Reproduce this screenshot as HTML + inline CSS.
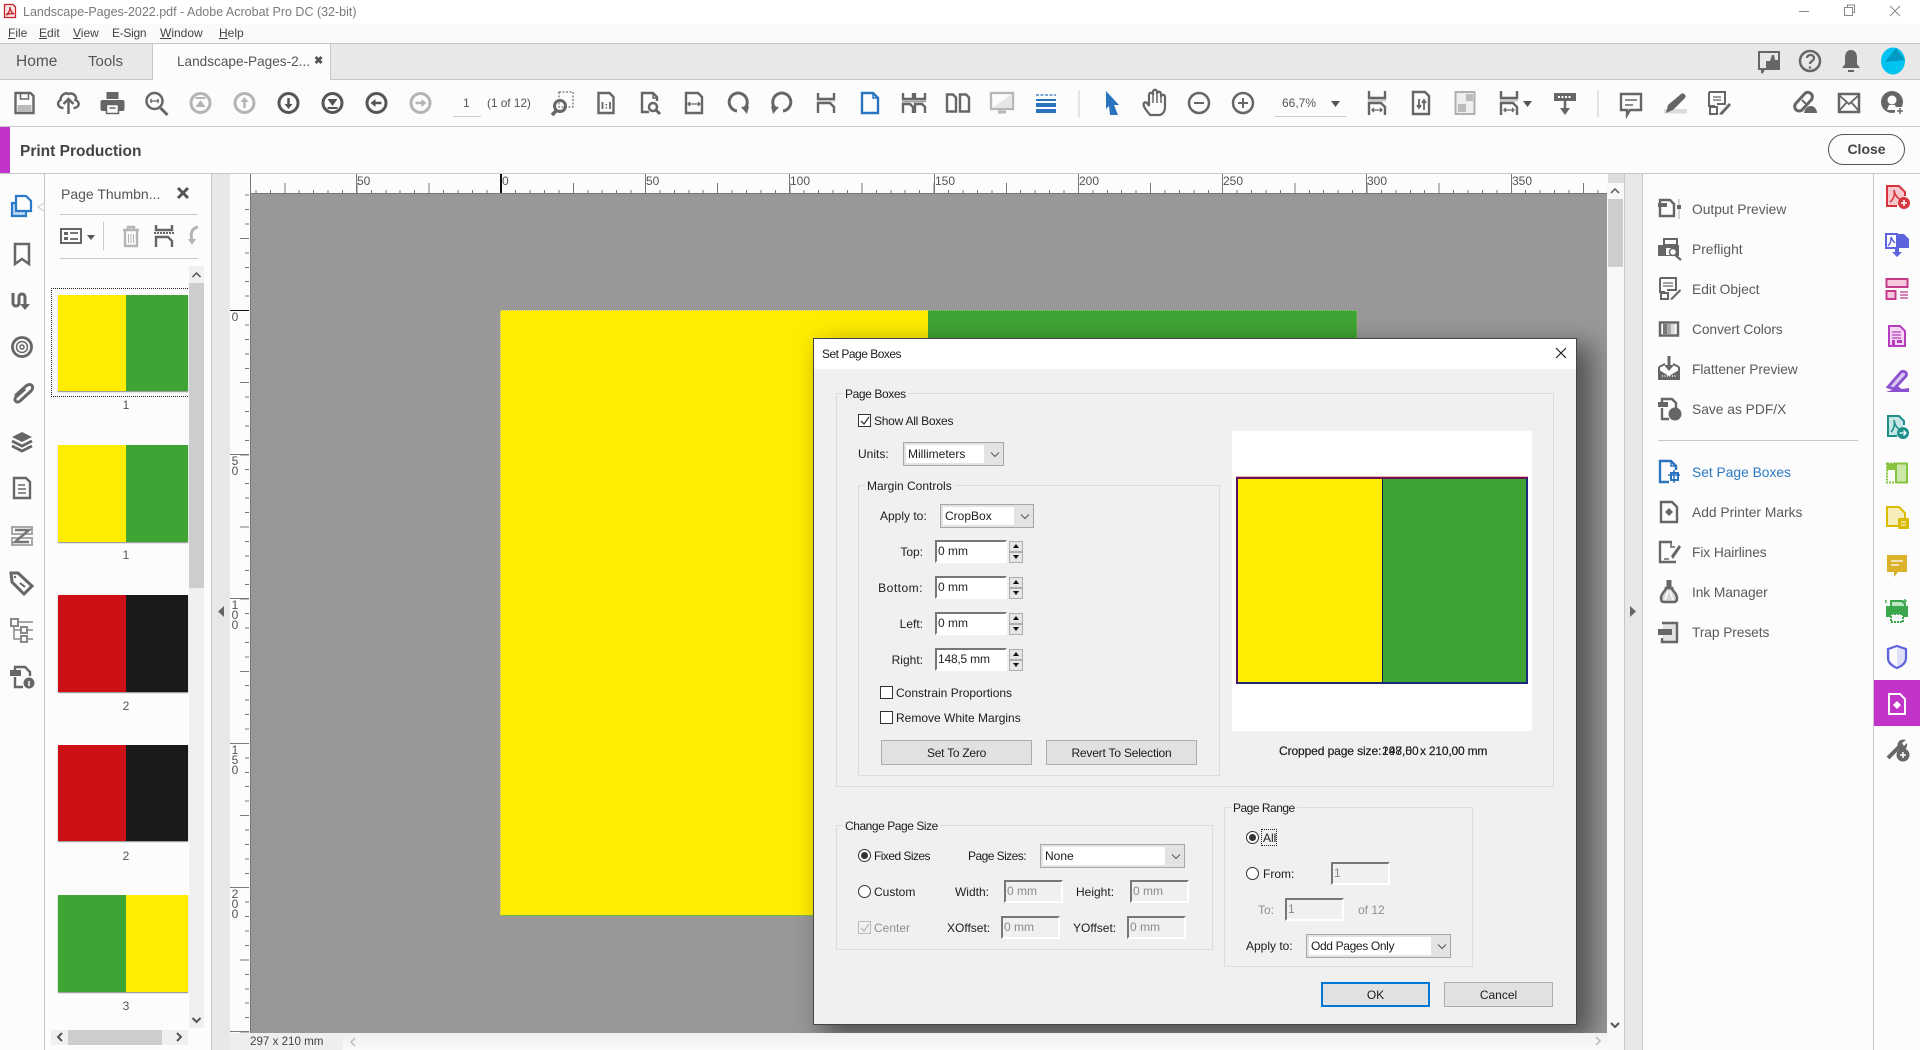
<!DOCTYPE html>
<html><head><meta charset="utf-8"><title>Landscape-Pages-2022.pdf - Adobe Acrobat Pro DC</title>
<style>
html,body{margin:0;padding:0;width:1920px;height:1050px;overflow:hidden;background:#fcfcfc;font-family:"Liberation Sans",sans-serif;font-size:12px;color:#1a1a1a}
.a{position:absolute}
.t{position:absolute;white-space:nowrap;line-height:16px;height:16px}
.d{font-size:12px;color:#1c1c1c}
.g{color:#9a9a9a}
.r{font-size:13.8px;color:#5a5a5a;left:1692px}
.m{font-size:12px;color:#444}
.v{position:absolute;font-size:12px;line-height:10px;width:10px;left:230px;text-align:center;color:#555}
.rl{font-size:12px;color:#555;top:173px}
.grp{position:absolute;border:1px solid #dcdcdc;box-sizing:border-box}
.lg{position:absolute;background:#f0f0f0;padding:0 2px;left:6px;font-size:12px;line-height:14px;top:-7px;white-space:nowrap;color:#1c1c1c}
.cb{position:absolute;box-sizing:border-box;border:1px solid #a6a6a6;background:#e3e3e3;height:24px}
.cb i{position:absolute;left:2px;top:2px;bottom:2px;background:#fff;display:block}
.cb b{position:absolute;left:4px;top:3px;font-weight:normal;font-size:12px;line-height:16px;color:#1c1c1c;white-space:nowrap}
.inp{position:absolute;box-sizing:border-box;width:72px;height:23px;background:#fff;border:2px solid;border-color:#777 #fff #fff #777;font-size:12px;line-height:16px;padding:1px 0 0 1px;color:#222;white-space:nowrap}
.dis{width:59px;background:#f0f0f0;color:#8a8a8a}
.sp{position:absolute;left:1009px;width:14px;height:11px;box-sizing:border-box;border:1px solid #adadad;background:#e6e6e6}
.chk{position:absolute;width:13px;height:13px;box-sizing:border-box;border:1px solid #333;background:#fff}
.rad{position:absolute;width:13px;height:13px;box-sizing:border-box;border:1px solid #333;border-radius:50%;background:#fff}
.rad.on:after{content:"";position:absolute;left:2px;top:2px;width:7px;height:7px;border-radius:50%;background:#333}
.btn{position:absolute;box-sizing:border-box;height:25px;border:1px solid #adadad;background:#e1e1e1;text-align:center;font-size:12px;line-height:25px;color:#1c1c1c}
.th{position:absolute;left:58px;width:130px;box-shadow:0 1px 1px #888}
.th i{position:absolute;top:0;bottom:0;display:block}
.n{position:absolute;left:116px;width:20px;text-align:center;font-size:12px;line-height:14px;color:#555}
</style></head><body>

<!-- chrome backgrounds -->
<div class="a" style="left:0;top:0;width:1920px;height:24px;background:#fff"></div>
<div class="a" style="left:0;top:24px;width:1920px;height:19px;background:#fafafa"></div>
<div class="a" style="left:0;top:43px;width:1920px;height:1px;background:#c8c8c8"></div>
<div class="a" style="left:0;top:44px;width:1920px;height:35px;background:#e8e8e8"></div>
<div class="a" style="left:0;top:79px;width:1920px;height:1px;background:#c8c8c8"></div>
<div class="a" style="left:152px;top:44px;width:179px;height:36px;background:#fcfcfc;border-left:1px solid #c8c8c8;border-right:1px solid #c8c8c8;box-sizing:border-box"></div>
<div class="a" style="left:0;top:80px;width:1920px;height:46px;background:#fcfcfc"></div>
<div class="a" style="left:0;top:126px;width:1920px;height:1px;background:#c8c8c8"></div>
<div class="a" style="left:0;top:127px;width:10px;height:46px;background:#c233c9"></div>
<div class="a" style="left:0;top:173px;width:1920px;height:1px;background:#c8c8c8"></div>

<div class="t" style="left:23px;top:4px;font-size:12.5px;color:#7a7a7a">Landscape-Pages-2022.pdf - Adobe Acrobat Pro DC (32-bit)</div>
<div class="t m" style="left:8px;top:25px"><u>F</u>ile</div>
<div class="t m" style="left:39px;top:25px"><u>E</u>dit</div>
<div class="t m" style="left:73px;top:25px"><u>V</u>iew</div>
<div class="t m" style="left:112px;top:25px;letter-spacing:-.3px">E-Sign</div>
<div class="t m" style="left:160px;top:25px"><u>W</u>indow</div>
<div class="t m" style="left:219px;top:25px"><u>H</u>elp</div>
<div class="t" style="left:16px;top:54px;font-size:15.5px;color:#555">Home</div>
<div class="t" style="left:88px;top:54px;font-size:15px;color:#555">Tools</div>
<div class="t" style="left:177px;top:54px;font-size:13.6px;color:#555">Landscape-Pages-2...</div>
<div class="t" style="left:314px;top:53px;font-size:11px;font-weight:bold;color:#555">✖</div>
<div class="t" style="left:20px;top:144px;font-size:15.5px;font-weight:bold;color:#444">Print Production</div>
<div class="a" style="left:1828px;top:134px;width:77px;height:31px;box-sizing:border-box;border:1px solid #555;border-radius:16px;text-align:center;font-size:14px;font-weight:bold;line-height:29px;color:#444">Close</div>

<div class="t" style="left:463px;top:95px;font-size:12px;color:#555">1</div>
<div class="t" style="left:487px;top:95px;font-size:12px;color:#555;letter-spacing:-.1px">(1 of 12)</div>
<div class="a" style="left:453px;top:116px;width:28px;height:1px;background:#ccc"></div>
<div class="t" style="left:1282px;top:95px;font-size:12px;color:#555">66,7%</div>
<div class="a" style="left:1275px;top:116px;width:71px;height:1px;background:#ccc"></div>

<!-- left nav + panel -->
<div class="a" style="left:44px;top:174px;width:1px;height:876px;background:#c8c8c8"></div>
<div class="a" style="left:211px;top:174px;width:1px;height:876px;background:#c8c8c8"></div>
<div class="a" style="left:212px;top:174px;width:18px;height:876px;background:#e8e8e8"></div>
<div class="t" style="left:61px;top:186px;font-size:14px;color:#555">Page Thumbn...</div>
<div class="a" style="left:60px;top:214px;width:138px;height:1px;background:#c8c8c8"></div>
<div class="a" style="left:60px;top:258px;width:138px;height:1px;background:#c8c8c8"></div>
<div class="a" style="left:103px;top:222px;width:1px;height:28px;background:#ccc"></div>

<div class="a" style="left:51px;top:288px;width:137px;height:109px;box-sizing:border-box;border:1px dotted #222;border-right:0"></div>
<div class="th" style="top:295px;height:96px"><i style="left:0;width:68px;background:#ffed00"></i><i style="left:68px;width:62px;background:#3ea433"></i></div>
<div class="n" style="top:398px">1</div>
<div class="th" style="top:445px;height:97px"><i style="left:0;width:68px;background:#ffed00"></i><i style="left:68px;width:62px;background:#3ea433"></i></div>
<div class="n" style="top:548px">1</div>
<div class="th" style="top:595px;height:97px"><i style="left:0;width:68px;background:#cc1016"></i><i style="left:68px;width:62px;background:#1a1a1a"></i></div>
<div class="n" style="top:699px">2</div>
<div class="th" style="top:745px;height:96px"><i style="left:0;width:68px;background:#cc1016"></i><i style="left:68px;width:62px;background:#1a1a1a"></i></div>
<div class="n" style="top:849px">2</div>
<div class="th" style="top:895px;height:97px"><i style="left:0;width:68px;background:#3ea433"></i><i style="left:68px;width:62px;background:#ffed00"></i></div>
<div class="n" style="top:999px">3</div>

<div class="a" style="left:189px;top:266px;width:15px;height:762px;background:#f0f0f0"></div>
<div class="a" style="left:189px;top:283px;width:15px;height:305px;background:#cdcdcd"></div>
<div class="a" style="left:51px;top:1030px;width:137px;height:15px;background:#f0f0f0"></div>
<div class="a" style="left:68px;top:1030px;width:94px;height:15px;background:#cdcdcd"></div>

<!-- rulers -->
<div class="a" style="left:250px;top:174px;width:1357px;height:19px;background:#fcfcfc"></div>
<div class="a" style="left:230px;top:174px;width:20px;height:859px;background:#fcfcfc"></div>
<div class="a" style="left:250px;top:174px;width:1px;height:19px;background:#777"></div>
<div class="a" style="left:250px;top:190px;width:1357px;height:3px;background:repeating-linear-gradient(90deg,transparent 0 5.4px,#777 5.4px 6.4px,transparent 6.4px 14.43px)"></div>
<div class="a" style="left:250px;top:183px;width:1357px;height:10px;background:repeating-linear-gradient(90deg,transparent 0 34.25px,#777 34.25px 35.25px,transparent 35.25px 72.15px)"></div>
<div class="a" style="left:356px;top:174px;width:1px;height:19px;background:#777"></div>
<div class="a" style="left:500px;top:174px;width:2px;height:19px;background:#111"></div>
<div class="a" style="left:645px;top:174px;width:1px;height:19px;background:#777"></div>
<div class="a" style="left:789px;top:174px;width:1px;height:19px;background:#777"></div>
<div class="a" style="left:934px;top:174px;width:1px;height:19px;background:#777"></div>
<div class="a" style="left:1078px;top:174px;width:1px;height:19px;background:#777"></div>
<div class="a" style="left:1222px;top:174px;width:1px;height:19px;background:#777"></div>
<div class="a" style="left:1366px;top:174px;width:1px;height:19px;background:#777"></div>
<div class="a" style="left:1511px;top:174px;width:1px;height:19px;background:#777"></div>
<div class="t rl" style="left:357px">50</div>
<div class="t rl" style="left:502px">0</div>
<div class="t rl" style="left:646px">50</div>
<div class="t rl" style="left:790px">100</div>
<div class="t rl" style="left:935px">150</div>
<div class="t rl" style="left:1079px">200</div>
<div class="t rl" style="left:1223px">250</div>
<div class="t rl" style="left:1367px">300</div>
<div class="t rl" style="left:1512px">350</div>
<div class="a" style="left:1608px;top:174px;width:16px;height:9px;background:#ddd"></div>

<div class="a" style="left:245px;top:193px;width:4px;height:840px;background:repeating-linear-gradient(180deg,transparent 0 1.6px,#777 1.6px 2.6px,transparent 2.6px 14.43px)"></div>
<div class="a" style="left:240px;top:193px;width:9px;height:840px;background:repeating-linear-gradient(180deg,transparent 0 44.85px,#777 44.85px 45.85px,transparent 45.85px 72.15px)"></div>
<div class="a" style="left:230px;top:310px;width:19px;height:1px;background:#111"></div>
<div class="a" style="left:230px;top:454px;width:19px;height:1px;background:#777"></div>
<div class="a" style="left:230px;top:598px;width:19px;height:1px;background:#777"></div>
<div class="a" style="left:230px;top:743px;width:19px;height:1px;background:#777"></div>
<div class="a" style="left:230px;top:887px;width:19px;height:1px;background:#777"></div>
<div class="a" style="left:230px;top:1031px;width:19px;height:1px;background:#777"></div>
<div class="v" style="top:312px">0</div>
<div class="v" style="top:456px">5<br>0</div>
<div class="v" style="top:600px">1<br>0<br>0</div>
<div class="v" style="top:745px">1<br>5<br>0</div>
<div class="v" style="top:889px">2<br>0<br>0</div>

<!-- scroller & right panel -->
<div class="a" style="left:1607px;top:183px;width:17px;height:867px;background:#f8f8f8"></div>
<div class="a" style="left:1608px;top:199px;width:15px;height:68px;background:#cdcdcd"></div>
<div class="a" style="left:1624px;top:174px;width:1px;height:876px;background:#c8c8c8"></div>
<div class="a" style="left:1625px;top:174px;width:17px;height:876px;background:#e8e8e8"></div>
<div class="a" style="left:1642px;top:174px;width:1px;height:876px;background:#c8c8c8"></div>
<div class="a" style="left:1873px;top:174px;width:1px;height:876px;background:#c8c8c8"></div>
<div class="a" style="left:1874px;top:680px;width:46px;height:46px;background:#c233c9"></div>
<div class="t r" style="top:202px">Output Preview</div>
<div class="t r" style="top:242px">Preflight</div>
<div class="t r" style="top:282px">Edit Object</div>
<div class="t r" style="top:322px;letter-spacing:-.1px">Convert Colors</div>
<div class="t r" style="top:362px;letter-spacing:-.1px">Flattener Preview</div>
<div class="t r" style="top:402px">Save as PDF/X</div>
<div class="a" style="left:1658px;top:440px;width:200px;height:1px;background:#c8c8c8"></div>
<div class="t r" style="top:465px;color:#2a78c4">Set Page Boxes</div>
<div class="t r" style="top:505px">Add Printer Marks</div>
<div class="t r" style="top:545px;letter-spacing:-.1px">Fix Hairlines</div>
<div class="t r" style="top:585px;letter-spacing:-.1px">Ink Manager</div>
<div class="t r" style="top:625px;letter-spacing:-.1px">Trap Presets</div>

<!-- status bar -->
<div class="a" style="left:230px;top:1033px;width:113px;height:17px;background:#eee"></div>
<div class="a" style="left:343px;top:1033px;width:1264px;height:17px;background:linear-gradient(180deg,#f0f0f0,#fafafa)"></div>
<div class="t" style="left:250px;top:1034px;font-size:11.6px;color:#444">297 x 210 mm</div>

<!-- document area (clipped) -->
<div class="a" style="left:0;top:0;width:1920px;height:1050px;clip-path:polygon(250px 193px,1607px 193px,1607px 1033px,250px 1033px)">
  <div class="a" style="left:250px;top:193px;width:1357px;height:840px;background:#989898;border-top:1px solid #777;border-left:1px solid #777;box-sizing:border-box"></div>
  <div class="a" style="left:500px;top:310px;width:428px;height:606px;background:#ffed00"></div>
  <div class="a" style="left:928px;top:310px;width:429px;height:606px;background:#3ea433"></div>
  <div class="a" style="left:500px;top:310px;width:857px;height:606px;box-sizing:border-box;border:1px dotted #b8b8a0;border-bottom:1px solid #78b848;border-right-color:#78b848"></div>
  <div class="a" style="left:813px;top:338px;width:764px;height:687px;box-sizing:border-box;background:#f0f0f0;border:1px solid #444;box-shadow:12px 10px 24px 3px rgba(0,0,0,.45)"></div>
</div>

<!-- dialog -->
<div class="a" style="left:814px;top:339px;width:762px;height:30px;background:#fff"></div>
<div class="t d" style="left:822px;top:346px;letter-spacing:-.5px">Set Page Boxes</div>

<div class="grp" style="left:836px;top:393px;width:718px;height:394px"><span class="lg" style="letter-spacing:-.4px">Page Boxes</span></div>
<div class="chk" style="left:858px;top:414px"></div>
<div class="t d" style="left:874px;top:413px;letter-spacing:-.25px">Show All Boxes</div>
<div class="t d" style="left:858px;top:446px">Units:</div>
<div class="cb" style="left:903px;top:442px;width:101px"><i style="width:78px"></i><b>Millimeters</b></div>

<div class="grp" style="left:858px;top:485px;width:362px;height:291px"><span class="lg">Margin Controls</span></div>
<div class="t d" style="left:880px;top:508px">Apply to:</div>
<div class="cb" style="left:940px;top:504px;width:94px"><i style="width:71px"></i><b>CropBox</b></div>

<div class="t d" style="left:880px;width:43px;text-align:right;top:544px">Top:</div>
<div class="inp" style="left:935px;top:540px">0 mm</div>
<div class="sp" style="top:541px"></div><div class="sp" style="top:552px"></div>
<div class="t d" style="left:870px;width:53px;text-align:right;top:580px;letter-spacing:.5px">Bottom:</div>
<div class="inp" style="left:935px;top:576px">0 mm</div>
<div class="sp" style="top:577px"></div><div class="sp" style="top:588px"></div>
<div class="t d" style="left:880px;width:43px;text-align:right;top:616px">Left:</div>
<div class="inp" style="left:935px;top:612px">0 mm</div>
<div class="sp" style="top:613px"></div><div class="sp" style="top:624px"></div>
<div class="t d" style="left:880px;width:43px;text-align:right;top:652px">Right:</div>
<div class="inp" style="left:935px;top:648px;letter-spacing:-.2px">148,5 mm</div>
<div class="sp" style="top:649px"></div><div class="sp" style="top:660px"></div>

<div class="chk" style="left:880px;top:686px"></div>
<div class="t d" style="left:896px;top:685px">Constrain Proportions</div>
<div class="chk" style="left:880px;top:711px"></div>
<div class="t d" style="left:896px;top:710px">Remove White Margins</div>
<div class="btn" style="left:881px;top:740px;width:151px;letter-spacing:-.25px">Set To Zero</div>
<div class="btn" style="left:1046px;top:740px;width:151px;letter-spacing:-.2px">Revert To Selection</div>

<div class="a" style="left:1232px;top:431px;width:300px;height:300px;background:#fff"></div>
<div class="a" style="left:1236px;top:477px;width:292px;height:207px;box-sizing:border-box;background:linear-gradient(90deg,#ffed00 0 144px,#141a50 144px 145px,#3ea433 145px);border:2px solid #1b2a7a;border-left-color:#5a1060;border-top-color:#6a1050;box-shadow:0 -1px 0 #f0b0b8"></div>
<div class="t" style="left:1279px;top:743px;font-size:12px;color:#1c1c1c;letter-spacing:-.1px;-webkit-text-stroke:.2px #1c1c1c">Cropped page size: </div>
<div class="t" style="left:1382px;top:743px;font-size:12px;color:#1c1c1c">297,00</div>
<div class="t" style="left:1382px;top:743px;font-size:12px;color:#1c1c1c">148,50</div>
<div class="t" style="left:1420px;top:743px;font-size:12px;color:#1c1c1c;letter-spacing:-.2px;-webkit-text-stroke:.2px #1c1c1c">x 210,00 mm</div>

<div class="grp" style="left:836px;top:825px;width:377px;height:125px"><span class="lg" style="letter-spacing:-.45px">Change Page Size</span></div>
<div class="rad on" style="left:858px;top:849px"></div>
<div class="t d" style="left:874px;top:848px;letter-spacing:-.55px">Fixed Sizes</div>
<div class="t d" style="left:968px;top:848px;letter-spacing:-.55px">Page Sizes:</div>
<div class="cb" style="left:1040px;top:844px;width:145px"><i style="width:122px"></i><b>None</b></div>
<div class="rad" style="left:858px;top:885px"></div>
<div class="t d" style="left:874px;top:884px">Custom</div>
<div class="t d" style="left:954px;width:35px;text-align:right;top:884px">Width:</div>
<div class="inp dis" style="left:1004px;top:880px">0 mm</div>
<div class="t d" style="left:1076px;top:884px">Height:</div>
<div class="inp dis" style="left:1130px;top:880px">0 mm</div>
<div class="chk" style="left:858px;top:921px;border-color:#bbb;background:#f0f0f0"></div>
<div class="t d g" style="left:874px;top:920px;color:#8f8f8f">Center</div>
<div class="t d" style="left:947px;top:920px">XOffset:</div>
<div class="inp dis" style="left:1001px;top:916px">0 mm</div>
<div class="t d" style="left:1073px;top:920px">YOffset:</div>
<div class="inp dis" style="left:1127px;top:916px">0 mm</div>

<div class="grp" style="left:1224px;top:807px;width:249px;height:160px"><span class="lg" style="letter-spacing:-.5px">Page Range</span></div>
<div class="rad on" style="left:1246px;top:831px"></div>
<div class="t d" style="left:1263px;top:830px">All</div>
<div class="a" style="left:1261px;top:829px;width:16px;height:17px;box-sizing:border-box;border:1px dotted #222"></div>
<div class="rad" style="left:1246px;top:867px"></div>
<div class="t d" style="left:1263px;top:866px">From:</div>
<div class="inp dis" style="left:1331px;top:862px">1</div>
<div class="t d" style="left:1258px;top:902px;color:#8f8f8f">To:</div>
<div class="inp dis" style="left:1285px;top:898px">1</div>
<div class="t d" style="left:1358px;top:902px;color:#8f8f8f">of 12</div>
<div class="t d" style="left:1246px;top:938px">Apply to:</div>
<div class="cb" style="left:1306px;top:934px;width:145px"><i style="width:122px"></i><b style="letter-spacing:-.35px">Odd Pages Only</b></div>
<div class="btn" style="left:1321px;top:982px;width:109px;border:2px solid #0078d7;line-height:23px">OK</div>
<div class="btn" style="left:1444px;top:982px;width:109px">Cancel</div>

<!-- all vector icons -->
<svg class="a" style="left:0;top:0" width="1920" height="1050" viewBox="0 0 1920 1050" fill="none" stroke="#666" stroke-width="2.400">
<!-- title icon -->
<g transform="translate(10,11)" stroke="#c8232c" stroke-width="1.300"><path d="M-5.500-6.500H3L5.500-4V6.500H-5.500Z" fill="#fbe6e6"/><path d="M-4 4C-1 2 0-1 0-4C0-1 2 2 4 3C1 2-2 3-4 4Z"/></g>
<!-- window controls -->
<path d="M1799 11.500H1809" stroke="#888" stroke-width="1"/>
<path d="M1844.500 7.500H1852.500V15.500H1844.500ZM1847.500 7.500V5H1854.500V12.500H1852.500" stroke="#888" stroke-width="1"/>
<path d="M1890 6L1900 16M1900 6L1890 16" stroke="#888" stroke-width="1"/>

<!-- tabs row icons -->
<g transform="translate(1769,61)"><path d="M-10-9H10V8H-5L-7 12V8H-10Z" stroke-width="2"/><path d="M-3 8V0H1L3-6L5-6L6-1H10V8Z" fill="#666" stroke="none"/></g>
<g transform="translate(1810,61)"><circle r="10" stroke-width="2.500"/><path d="M-3-3C-3-7 4-7 4-3C4 0 0 0 0 3" stroke-width="2.200"/><circle cy="6.500" r="1.300" fill="#666" stroke="none"/></g>
<g transform="translate(1851,61)" fill="#666" stroke="none"><path d="M0-11C4-11 6-8 6-3V3L9 7H-9L-6 3V-3C-6-8-4-11 0-11Z"/><rect x="-3" y="9" width="6" height="2"/></g>
<ellipse cx="1893" cy="61" rx="12" ry="13.500" fill="#00c3f2" stroke="none"/>
<path d="M1896 48L1905 60L1885 62Z" fill="#0099c4" stroke="none"/>

<!-- toolbar -->
<g transform="translate(24.500,103)"><path d="M-9-10H6L9-7V10H-9Z"/><path d="M-4-10V-4H4V-10" stroke-width="1.500"/><rect x="-7" y="2" width="14" height="7" fill="#bbb" stroke="none"/></g>
<g transform="translate(68.500,103)" stroke-width="2.500"><path d="M-5 5C-11 5-12-1-8-3C-8-8-3-11 0-9C5-11 9-6 7-3C12-1 11 5 5 5"/><path d="M0 11V-4M-5 1L0-4L5 1"/></g>
<g transform="translate(112.500,103)"><rect x="-6" y="-11" width="12" height="7" fill="#666" stroke="none"/><rect x="-12" y="-3" width="24" height="11" rx="2" fill="#666" stroke="none"/><rect x="-6" y="1.500" width="12" height="9" fill="#fcfcfc" stroke="#666" stroke-width="1.500"/><path d="M-3 5H3" stroke-width="1.500"/></g>
<g transform="translate(156.500,103)"><circle cx="-2" cy="-2" r="8" stroke-width="2.500"/><path d="M4 5L11 12" stroke-width="3"/><path d="M-6-2H2M-5-4L-6-2L-5 0M1-4L2-2L1 0" stroke-width="1.300"/></g>

<g transform="translate(200.500,103)" stroke="#b4b4b4"><circle r="9.500" stroke-width="3"/><path d="M-5-5H5" stroke-width="2"/><path d="M0-3L5 4H-5Z" fill="#b4b4b4" stroke="none"/></g>
<g transform="translate(244.500,103)" stroke="#b4b4b4"><circle r="9.500" stroke-width="3"/><path d="M0 5V-3" stroke-width="2.500"/><path d="M-4-1L0-6L4-1Z" fill="#b4b4b4" stroke="none"/></g>
<g transform="translate(288.500,103)" stroke="#555"><circle r="9.500" stroke-width="3"/><path d="M0-5V3" stroke-width="2.500"/><path d="M-4 1L0 6L4 1Z" fill="#555" stroke="none"/></g>
<g transform="translate(332.500,103)" stroke="#555"><circle r="9.500" stroke-width="3"/><path d="M-5 5H5" stroke-width="2"/><path d="M0 3L5-4H-5Z" fill="#555" stroke="none"/></g>
<g transform="translate(376.500,103)" stroke="#555"><circle r="9.500" stroke-width="3"/><path d="M5 0H-3" stroke-width="2.500"/><path d="M-1-4L-6 0L-1 4Z" fill="#555" stroke="none"/></g>
<g transform="translate(420.500,103)" stroke="#b4b4b4"><circle r="9.500" stroke-width="3"/><path d="M-5 0H3" stroke-width="2.500"/><path d="M1-4L6 0L1 4Z" fill="#b4b4b4" stroke="none"/></g>

<g transform="translate(562,103)"><rect x="-3" y="-11" width="14" height="15" stroke-width="1" stroke="#555" stroke-dasharray="2 1.500"/><circle cx="-2" cy="3" r="5.500" stroke-width="3"/><path d="M-6 8L-10 12" stroke-width="3.500"/></g>
<g transform="translate(606,103)"><path d="M-7.500-10H3.500L7.500-6V10H-7.500Z"/><path d="M-3.500-1V6M4-1V6" stroke-width="1.800"/><path d="M.3 1V2.500M.3 4V5.500" stroke-width="1.500"/></g>
<g transform="translate(650,103)"><path d="M-1 9H-8V-10H3L7-6V-2"/><path d="M3-10V-5H7" stroke-width="1.500"/><circle cx="3" cy="4" r="4" stroke-width="2.500"/><path d="M6 7L10 11" stroke-width="3"/></g>
<g transform="translate(694,103)"><path d="M-8-10H4L8-6V10H-8Z"/><path d="M-5 1H5M-4-1L-6 1L-4 3M4-1L6 1L4 3" stroke-width="1.300"/></g>
<g transform="translate(738,103)" stroke-width="3"><path d="M-1 8A9 9 0 1 1 7 5"/><path d="M3 4L11 3L9 11Z" fill="#666" stroke="none"/></g>
<g transform="translate(782,103) scale(-1,1)" stroke-width="3"><path d="M-1 8A9 9 0 1 1 7 5"/><path d="M3 4L11 3L9 11Z" fill="#666" stroke="none"/></g>
<g transform="translate(826,103)"><path d="M-8-10V-4H8V-10"/><path d="M-8 10V0H4L8 4V10"/><path d="M-9-2H9" stroke="#ccc" stroke-width="1.500"/></g>
<g transform="translate(870,103)" stroke="#2a74bf"><path d="M-8-10H3L8-5V10H-8Z" stroke-width="2.400"/><path d="M3-10V-5H8" stroke-width="1.500"/></g>
<g transform="translate(914,103)"><path d="M-11-10V-4H-1V-10M1-10V-4H11V-10"/><path d="M-11 10V1H-4L-1 4V10M1 10V1H8L11 4V10"/><path d="M-12-1.500H12" stroke="#999" stroke-width="1.500"/></g>
<g transform="translate(958,103)"><path d="M-11-8.500H-5L-2-5.500V8.500H-11ZM2-8.500H8L11-5.500V8.500H2Z"/></g>
<g transform="translate(1002,103)" stroke="#b8b8b8"><rect x="-11" y="-10" width="22" height="16"/><path d="M-10 5L10-9V5Z" fill="#e6e6e6" stroke="none"/><path d="M-4 9H4" stroke-width="3"/></g>
<g transform="translate(1046,103)" stroke="#2a74bf"><path d="M-10-8H10" stroke-width="1.200" stroke-dasharray="3 1.500"/><path d="M-10-3H10" stroke-width="2"/><path d="M-10 2H10M-10 8H10" stroke-width="4"/></g>

<path d="M1079 90V117" stroke="#ccc" stroke-width="1"/>
<path d="M1106 92L1119 106H1114L1118 116H1110L1109 107L1106 110Z" fill="#2a74bf" stroke="none" transform="translate(0,-1)"/>
<g transform="translate(1155,103)"><path d="M-5 12C-8 8-13 3-11 0C-9-2-7 1-6 3V-8C-6-11-2-11-2-8V-11C-2-14 2-14 2-11V-9C2-12 6-12 6-9V-6C6-9 10-9 10-6V4C10 9 7 12 4 12Z" stroke-width="2.200"/><path d="M-2-8V0M2-9V0M6-6V0" stroke-width="1.500"/></g>
<g transform="translate(1199,103)" stroke-width="2.500"><circle r="10"/><path d="M-5 0H5" stroke-width="2"/></g>
<g transform="translate(1243,103)" stroke-width="2.500"><circle r="10"/><path d="M-5 0H5M0-5V5" stroke-width="2"/></g>
<path d="M1331 101H1340L1335.500 107Z" fill="#555" stroke="none"/>

<g transform="translate(1377,103)"><path d="M-8-12V-5H8V-12"/><rect x="-9" y="-3.500" width="18" height="2" fill="#ccc" stroke="none"/><path d="M-8 12V0H4L8 4V12"/><path d="M-5 7H5M-3 5L-5 7L-3 9M3 5L5 7L3 9" stroke-width="1.300"/></g>
<g transform="translate(1421,103)"><path d="M-8-11H4L8-7V11H-8Z"/><path d="M-2-4V4M3-1V7" stroke-width="1.800"/><path d="M-4 2L-2 5L0 2M1 0L3-3L5 0" stroke-width="1.800"/></g>
<g transform="translate(1465,103)" stroke="#b0b0b0"><rect x="-9.500" y="-11" width="19" height="22" stroke-width="2" fill="#eee"/><rect x="1" y="-9" width="7" height="7" fill="#bbb" stroke="none"/><rect x="-7" y="1" width="8" height="8" fill="#bbb" stroke="none"/></g>
<g transform="translate(1509,103)"><path d="M-8-12V-5H8V-12"/><rect x="-9" y="-3.500" width="18" height="2" fill="#ccc" stroke="none"/><path d="M-8 12V0H4L8 4V12"/><path d="M-5 7H5M-3 5L-5 7L-3 9M3 5L5 7L3 9" stroke-width="1.300"/></g>
<path d="M1523 101H1532L1527.500 107Z" fill="#555" stroke="none"/>
<g transform="translate(1565,103)"><rect x="-11" y="-10" width="22" height="8" fill="#666" stroke="none"/><path d="M-7-6H7" stroke="#fff" stroke-width="2" stroke-dasharray="2 1.500"/><path d="M0-2V9" stroke-width="2.500"/><path d="M-5 5L0 12L5 5Z" fill="#666" stroke="none"/></g>
<path d="M1598 90V117" stroke="#ccc" stroke-width="1"/>
<g transform="translate(1631,103)"><path d="M-10-9H10V7H-1L-4 12V7H-10Z" stroke-width="2.400"/><path d="M-6-3H6M-6 2H2" stroke-width="1.500"/></g>
<g transform="translate(1675,103)"><rect x="-11" y="6" width="23" height="4.500" fill="#ddd" stroke="none"/><path d="M-9 10L-7 2L6-9C8-11 12-8 10-5L-2 7Z" fill="#666" stroke="none"/></g>
<g transform="translate(1719,103)"><path d="M-10-11H6V1H-2M-10-11V3H-4" stroke-width="2"/><path d="M-6-6H2M-6-3H2" stroke-width="1.300"/><rect x="-9" y="4" width="7" height="7" stroke-width="2"/><path d="M0 11L10 0L12 2L3 12Z" fill="#666" stroke="none"/></g>
<g transform="translate(1805,103)"><rect x="-12" y="-4.500" width="22" height="9" rx="4.500" stroke-width="3" transform="rotate(-48) translate(1,-2)"/><path d="M-3-3L2 2" stroke-width="2"/><path d="M-1 10C0 5 3 3 6 3C9 3 12 6 12 10Z" fill="#666" stroke="none"/></g>
<g transform="translate(1849,103)" stroke-width="2.500"><rect x="-10" y="-9" width="20" height="18"/><path d="M-10-8L0 1L10-8M-10 8L-2-1M10 8L2-1" stroke-width="1.800"/></g>
<g transform="translate(1892,102)"><circle r="11" fill="#666" stroke="none"/><circle cy="-2" r="4.500" fill="#fcfcfc" stroke="none"/><path d="M-3 3H3L5 8H-5Z" fill="#fcfcfc" stroke="none"/><rect x="3" y="5" width="10" height="10" fill="#fcfcfc" stroke="none"/><path d="M8 6V12M5 9H11" stroke-width="1.500"/></g>

<!-- left nav -->
<g transform="translate(22,206)" stroke="#2a7ac8"><path d="M-6-3H-10V10H4V5" fill="#bcd8f2" stroke-width="2.200"/><path d="M-6-10H4L9-5V5H-6Z" fill="#fcfcfc" stroke-width="2.200"/></g>
<path d="M44 203L38 207L44 211" fill="#fcfcfc" stroke="#c8c8c8" stroke-width="1"/>
<path d="M15 244H29V264L22 259L15 264Z" stroke-width="2.500"/>
<g transform="translate(22,301)"><path d="M-9-8V2C-9 6-3 6-3 2V-4C-3-8 3-8 3-4V4" stroke-width="3"/><path d="M-2 3H8L3 9Z" fill="#666" stroke="none"/></g>
<g transform="translate(22,347)"><circle r="9.500" stroke-width="2.800"/><circle r="5.500" stroke-width="1.500"/><circle r="2" stroke-width="1.500"/></g>
<path d="M15 396L26 386C31 382 35 387 31 391L20 401C17 404 13 400 16 397L25 389" stroke-width="3"/>
<g transform="translate(22,442)"><path d="M0-10L10-5L0 0L-10-5Z" fill="#666" stroke="none"/><path d="M-10-1L0 4L10-1M-10 4L0 9L10 4" stroke-width="2.800"/></g>
<g transform="translate(22,488)"><path d="M-8-10H4L8-6V10H-8Z"/><path d="M-4-3H3M-4 1H4M-4 5H4" stroke-width="1.500"/></g>
<g transform="translate(22,536)" stroke="#a8a8a8"><rect x="-10" y="-9" width="20" height="7" stroke-width="2"/><rect x="-10" y="2" width="20" height="7" stroke-width="2"/><path d="M-7-6H7L-7 6H7" stroke="#777" stroke-width="2.500"/></g>
<g transform="translate(22,583)"><path d="M-11-11H-4L10 2L2 10L-10-2Z" stroke-width="3" transform="translate(0,1)"/><path d="M-2 0L3 4" stroke-width="2"/><circle cx="-7" cy="-6" r="1.200" fill="#666" stroke="none"/></g>
<g transform="translate(22,630)" stroke="#888" stroke-width="2"><rect x="-11" y="-11" width="7" height="7"/><rect x="-1" y="-3" width="6" height="6"/><rect x="-1" y="6" width="6" height="6"/><path d="M-8-4V9H-1M-8 0H-1M-4-8H11M5 0H11M5 9H11" stroke-width="1.500"/></g>
<g transform="translate(22,677)"><path d="M-7-6V-10H3L8-5V-1"/><rect x="-12" y="-7" width="11" height="6" fill="#666" stroke="none"/><path d="M-7 0V10H1"/><circle cx="7" cy="6" r="5.500" fill="#666" stroke="none"/><path d="M7 4V9" stroke="#fff" stroke-width="1.500"/></g>

<!-- panel toolbar -->
<path d="M178 188L188 198M188 188L178 198" stroke="#555" stroke-width="3"/>
<g transform="translate(71,236)"><rect x="-10" y="-7" width="20" height="14" stroke-width="2"/><rect x="-7" y="-4" width="4" height="3" fill="#666" stroke="none"/><rect x="-7" y="1" width="4" height="3" fill="#666" stroke="none"/><path d="M-1-3H7M-1 3H7" stroke-width="1.800"/></g>
<path d="M87 235H95L91 240Z" fill="#555" stroke="none"/>
<g transform="translate(131,236)" stroke="#b4b4b4"><path d="M-8-6H8M-3-6V-9H3V-6"/><path d="M-6-5V10H6V-5" stroke-width="2.400"/><path d="M-2.500-2V7M0-2V7M2.500-2V7" stroke-width="1"/></g>
<g transform="translate(164,236)"><path d="M-8-11V-6H8V-11"/><path d="M-10-3H10" stroke-width="2" stroke-dasharray="2 1"/><path d="M-8 11V1H4L8 5V11"/></g>
<g transform="translate(195,236)" stroke="#b4b4b4" stroke-width="3"><path d="M3-9C-3-8-5-3-3 4"/><path d="M-7 3H1L-3 9Z" fill="#b4b4b4" stroke="none"/></g>

<!-- panel scrollbars -->
<path d="M192.500 277L196.500 273L200.500 277" stroke="#555" stroke-width="1.500"/>
<path d="M192.500 1018L196.500 1022L200.500 1018" stroke="#555" stroke-width="2"/>
<path d="M62 1033L58 1037L62 1041" stroke="#555" stroke-width="2"/>
<path d="M177 1033L181 1037L177 1041" stroke="#555" stroke-width="2"/>

<!-- collapse arrows -->
<path d="M224 606L218 611.500L224 617Z" fill="#666" stroke="none"/>
<path d="M1630 606L1636 611.500L1630 617Z" fill="#666" stroke="none"/>
<path d="M1611 193L1615 189L1619 193" stroke="#555" stroke-width="1.500"/>
<path d="M1611 1023L1615 1027L1619 1023" stroke="#555" stroke-width="2"/>
<path d="M355 1038L351 1042L355 1046" stroke="#bbb" stroke-width="1.500"/>
<path d="M1596 1037L1600 1041L1596 1045" stroke="#bbb" stroke-width="1.500"/>

<!-- right tool list icons -->
<g transform="translate(1669,209)"><path d="M-3-9H-9V7H5V-5L1-9Z" stroke-width="2.400"/><rect x="-11" y="-6" width="9" height="4" fill="#666" stroke="none"/><path d="M10-10V10" stroke-width="1" stroke="#aaa"/><rect x="8" y="-4" width="4" height="4" fill="#666" stroke="none"/></g>
<g transform="translate(1669,249)"><rect x="-5" y="-10" width="13" height="6" stroke-width="2"/><rect x="-11" y="-4" width="21" height="11" fill="#666" stroke="none"/><rect x="-3" y="-1" width="9" height="7" fill="#fcfcfc" stroke="none"/><path d="M5 5L12 11" stroke-width="2.200"/><circle cx="4" cy="3" r="3.500" stroke-width="1.500" fill="#fcfcfc"/></g>
<g transform="translate(1669,289)"><path d="M-9-11H7V1H-2M-9-11V3H-4" stroke-width="2"/><path d="M-6-6H4M-6-3H4" stroke-width="1.300"/><rect x="-8" y="4" width="7" height="6" stroke-width="2"/><path d="M1 10L11 0L12 2L3 11Z" fill="#666" stroke="none"/></g>
<g transform="translate(1669,329)"><rect x="-9" y="-6.500" width="18" height="13" fill="#fff" stroke="#666" stroke-width="2.500"/><rect x="-6" y="-5" width="4" height="10" fill="#777" stroke="none"/><rect x="-2" y="-5" width="4" height="10" fill="#aaa" stroke="none"/><rect x="2" y="-5" width="4" height="10" fill="#ddd" stroke="none"/></g>
<g transform="translate(1669,369)"><path d="M0-13V-3" stroke-width="3"/><path d="M-5-4L0 2L5-4Z" fill="#666" stroke="none"/><path d="M-10-2L-4-5M10-2L4-5M-10-2V10H10V-2" stroke-width="2"/><path d="M-10 1L0 7L10 1V10H-10Z" fill="#666" stroke="none"/><path d="M-7 7H7" stroke="#fff" stroke-width="1.500" stroke-dasharray="1 1.500"/></g>
<g transform="translate(1669,409)"><path d="M-7-7V-10H3L7-6V-1"/><rect x="-11" y="-7" width="10" height="5" fill="#666" stroke="none"/><path d="M-7-1V10H0"/><circle cx="6" cy="5" r="6.500" fill="#666" stroke="none"/></g>
<g transform="translate(1669,472)" stroke="#2a74bf"><path d="M0 10H-9V-11H2L7-6V-2" stroke-width="2.400"/><path d="M2-11V-6H7" stroke-width="1.500"/><rect x="2" y="1" width="7" height="7" stroke-width="2"/><path d="M-1 3H11M5-2V11" stroke-width="1.500"/></g>
<g transform="translate(1669,512)"><path d="M-8-10H3L8-5V10H-8Z"/><path d="M0-4L4 0L0 4L-4 0Z" fill="#666" stroke="none"/></g>
<g transform="translate(1669,552)"><path d="M7 10H-9V-10H3"/><path d="M2-10V-5H6" stroke-width="1.500"/><path d="M-5 7H0" stroke-width="1.500"/><path d="M2 4L10-7L12-5L4 7Z" fill="#666" stroke="none"/></g>
<g transform="translate(1669,592)"><rect x="-2.500" y="-12" width="5" height="8" fill="#666" stroke="none"/><path d="M-3-4C-3-1-8 1-8 6C-8 9-7 10-5 10H5C7 10 8 9 8 6C8 1 3-1 3-4Z" fill="#d8d8d8" stroke-width="2.600"/><path d="M-1-1L-4 8M1-1L4 8" stroke="#fcfcfc" stroke-width="1.500"/></g>
<g transform="translate(1669,632)"><rect x="-6" y="-8" width="13" height="17" fill="#e2e2e2" stroke="none"/><path d="M-7-9H8V10H-7V6"/><rect x="-11" y="-3" width="14" height="6" fill="#666" stroke="none"/></g>

<!-- right colored column -->
<g transform="translate(1897,197)" stroke="#d8323e"><path d="M0 9H-10V-11H2L8-5V-1" stroke-width="2" fill="#f5c8cc"/><path d="M-7 5C-3 2-2-2-3-7C-2-2 0 1 3 2" stroke-width="1.500"/><circle cx="7" cy="6" r="6" fill="#d8323e" stroke="none"/><path d="M4 6H10M7 3V9" stroke="#fff" stroke-width="1.500"/></g>
<g transform="translate(1897,243)"><path d="M-11-9H0V5H-11Z" fill="#fff" stroke="#5d63dc" stroke-width="2"/><path d="M1-9H7L12-4V5H1Z" fill="#5d63dc" stroke="none"/><path d="M-9 3C-6 0-6-3-6-6C-5-3-3-1-2 0" stroke="#5d63dc" stroke-width="1.500"/><path d="M-2 5V9H-5L0 14L5 9H2V5Z" fill="#5d63dc" stroke="none"/></g>
<g transform="translate(1897,289)" stroke="#c73a8a"><rect x="-10.500" y="-10" width="21" height="8" fill="#f5c8de" stroke-width="2"/><rect x="-10.500" y="2" width="9" height="8" fill="#f5c8de" stroke-width="2"/><path d="M3 3H11M3 6H11M3 9H11" stroke-width="1.200"/></g>
<g transform="translate(1897,336)" stroke="#b83cc0"><path d="M-8-10H3L8-5V10H-8Z" fill="#f2d6f4" stroke-width="2"/><path d="M-5-4H4M-5-1H4M-5 2H4" stroke-width="1.300"/><rect x="-5" y="4" width="3" height="5" fill="#b83cc0" stroke="none"/><rect x="0" y="4" width="5" height="3" fill="#b83cc0" stroke="none"/></g>
<g transform="translate(1897,381)"><path d="M-9 6L4-9C7-11 11-8 9-5L-3 8Z" fill="#dac8f2" stroke="#8d50d0" stroke-width="2.800"/><path d="M-11 11H12V7L5 8L0 5L-5 9Z" fill="#8d50d0" stroke="none"/></g>
<g transform="translate(1897,427)" stroke="#1f8f8c"><path d="M0 9H-9V-11H2L7-6V-2" fill="#c4e6e4" stroke-width="2"/><path d="M-6 5C-3 2-2-2-3-7C-2-2 0 1 2 2" stroke-width="1.500"/><circle cx="6" cy="6" r="6" fill="#1f8f8c" stroke="none"/><path d="M2.500 6H9M6.500 3.500L9 6L6.500 8.500" stroke="#fff" stroke-width="1.300"/></g>
<g transform="translate(1897,473)" stroke="#86c440"><rect x="-10" y="-9.500" width="9" height="19" stroke-width="2" stroke-dasharray="2 1"/><rect x="-1" y="-9.500" width="11" height="19" fill="#cce8a8" stroke-width="2"/><path d="M-10-9.500H-1V-3H-10" fill="#86c440" stroke="none"/></g>
<g transform="translate(1897,518)" stroke="#dbbb00"><path d="M3 8H-10V-11H2L8-5V0" fill="#f7edba" stroke-width="2"/><rect x="1" y="0" width="11" height="11" rx="1" fill="#dbbb00" stroke="none"/><path d="M4 4H9M4 7H9" stroke="#fff" stroke-width="1"/></g>
<g transform="translate(1897,565)"><path d="M-10-10H10V7H1L-3 12V7H-10Z" fill="#dbb22a" stroke="none"/><path d="M-6-4H6M-6 0H2" stroke="#fff" stroke-width="1.200"/></g>
<g transform="translate(1897,611)"><rect x="-11" y="-5" width="22" height="11" fill="#3ca84e" stroke="none"/><path d="M-6-5V-10H5L8-7V-5" fill="#bfe6c4" stroke="#3ca84e" stroke-width="2"/><rect x="-6" y="3" width="12" height="8" fill="#fcfcfc" stroke="#3ca84e" stroke-width="2" stroke-dasharray="2 1"/><path d="M8-12V-8M6-10H10M-11-11V-8" stroke="#3ca84e" stroke-width="1.300"/></g>
<g transform="translate(1897,657)"><path d="M0-11L9-8V1C9 6 5 9 0 11C-5 9-9 6-9 1V-8Z" fill="#dfe0f8" stroke="#5d63dc" stroke-width="2.200"/><path d="M0-10V10L-7 4V-7Z" fill="#fcfcfc" stroke="none"/></g>
<g transform="translate(1897,704)" stroke="#fff"><path d="M-8-10H3L8-5V10H-8Z" stroke-width="2"/><path d="M0-3L4 1L0 5L-4 1Z" fill="#fff" stroke="none"/></g>
<g transform="translate(1897,749)"><path d="M-9 9L3-3" stroke-width="4"/><path d="M1-1C-1-6 3-11 9-9L5-6L7-3L10-6C11 0 6 3 3 1Z" fill="#666" stroke="none"/><circle cx="6" cy="6" r="6.500" fill="#666" stroke="none"/><path d="M3 6H9M6 3V9" stroke="#fff" stroke-width="1.500"/></g>

<!-- dialog glyphs -->
<path d="M1556 348L1566 358M1566 348L1556 358" stroke="#222" stroke-width="1.200"/>
<path d="M861 421L864 424L869 417" stroke="#333" stroke-width="1.300"/>
<path d="M861 928L864 931L869 924" stroke="#bbb" stroke-width="1.300"/>
<g stroke="#555" stroke-width="1"><path d="M991 452.500L995 456.500L999 452.500"/><path d="M1021 514.500L1025 518.500L1029 514.500"/><path d="M1172 854.500L1176 858.500L1180 854.500"/><path d="M1438 944.500L1442 948.500L1446 944.500"/></g>
<g fill="#111" stroke="none">
<path d="M1016 544L1019 548H1013Z"/><path d="M1016 559L1013 555H1019Z"/>
<path d="M1016 580L1019 584H1013Z"/><path d="M1016 595L1013 591H1019Z"/>
<path d="M1016 616L1019 620H1013Z"/><path d="M1016 631L1013 627H1019Z"/>
<path d="M1016 652L1019 656H1013Z"/><path d="M1016 667L1013 663H1019Z"/>
</g>
</svg>
</body></html>
